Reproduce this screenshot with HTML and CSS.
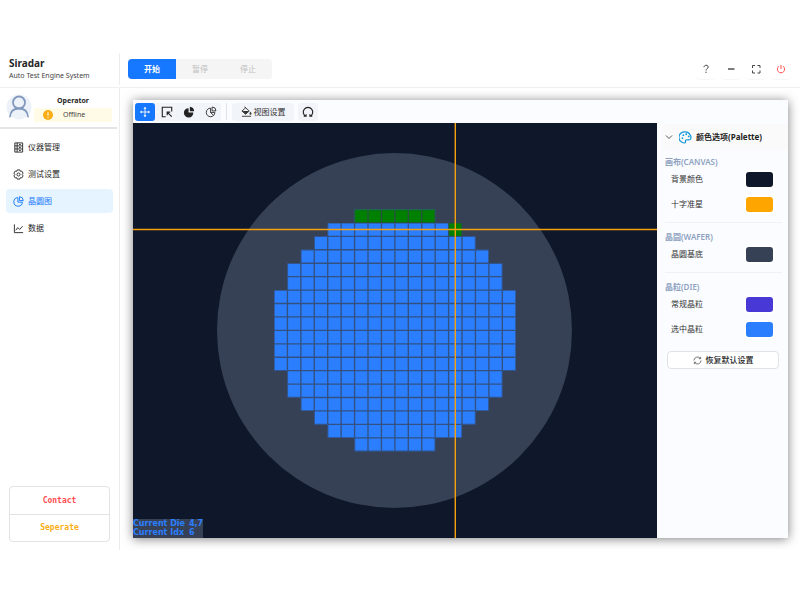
FILE: index.html
```html
<!DOCTYPE html>
<html lang="zh-CN">
<head>
<meta charset="utf-8">
<title>Siradar</title>
<link rel="stylesheet" href="styles.css">
</head>
<body>
<div class="app">
  <header class="topbar">
    <div class="brand">
      <h1>Siradar</h1>
      <p>Auto Test Engine System</p>
    </div>
    <div class="run-group">
      <button class="run primary">开始</button>
      <button class="run" disabled>暂停</button>
      <button class="run" disabled>停止</button>
    </div>
    <div class="window-tools">
      <button class="win" aria-label="Help"><svg viewBox="0 0 10 10"><path d="M3 3.200C3 .6 7.200.7 7.200 3 7.200 4.700 5 4.600 5 6.500M5 7.700V9"/></svg></button>
      <button class="win" aria-label="Minimize"><svg viewBox="0 0 10 10"><path d="M2 5h6.500" stroke-width="1.400"/></svg></button>
      <button class="win" aria-label="Full screen"><svg viewBox="0 0 10 10"><path d="M1.500 4V1.500H4M6.500 1.500H9V4M9 6.500V9H6.500M4 9H1.500V6.500"/></svg></button>
      <button class="win power" aria-label="Power"><svg viewBox="0 0 10 10"><path d="M3 2.200a3.600 3.600 0 1 0 4 0M5 1v4"/></svg></button>
    </div>
  </header>

  <div class="body">
    <aside class="sidebar">
      <div class="user">
        <svg class="avatar" viewBox="0 0 26 26"><circle cx="13" cy="13" r="12.500" fill="#edf2f9" stroke="none"/><g fill="none" stroke="#8299bd" stroke-width="1.800" stroke-linecap="round"><circle cx="13" cy="8.500" r="6"/><path d="M4 22.500c.5-5 3.500-8 9-8s8.500 3 9 8"/></g></svg>
        <div class="user-info">
          <strong>Operator</strong>
          <span class="status"><svg viewBox="0 0 10 10"><circle cx="5" cy="5" r="5" fill="#faad14" stroke="none"/><path d="M5 2.200v3.600M5 7v1" stroke="#fff" stroke-width="1"/></svg><span>Offline</span></span>
        </div>
      </div>
      <nav class="menu">
        <a href="#"><svg viewBox="0 0 12 12"><path d="M2 1h8.500v10H2zM2 4.300h8.500M2 7.600h8.500M4.500 1v10M6.500 2.700h2M6.500 6h2M6.500 9.300h2"/></svg>仪器管理</a>
        <a href="#"><svg viewBox="0 0 12 12"><path d="M4.600 1h2.800l.5 1.500 1.600-.3L11 4.500 10 6l1 1.500-1.500 2.300-1.600-.3-.5 1.500H4.600l-.5-1.500-1.600.3L1 7.500 2 6 1 4.500l1.500-2.300 1.600.3z"/><circle cx="6" cy="6" r="1.700"/></svg>测试设置</a>
        <a href="#" class="active"><svg viewBox="0 0 12 12"><path d="M5.300 1.700a4.700 4.700 0 1 0 5 5H5.300zM7 .8V5h4.200A4.300 4.300 0 0 0 7 .8z"/></svg>晶圆图</a>
        <a href="#"><svg viewBox="0 0 12 12"><path d="M1.500 1.500v9H11M3 8l2.200-3 2 2 3.300-3.500"/></svg>数据</a>
      </nav>
      <div class="links">
        <button class="contact">Contact</button>
        <button class="separate">Seperate</button>
      </div>
    </aside>

    <main class="workspace">
      <section class="panel">
        <div class="viewer">
          <div class="tools">
            <div class="modes">
              <button class="tool on" aria-label="Move"><svg viewBox="0 0 14 14"><path d="M7 2v10M2 7h10" /><path d="M7 1 5.200 3.200h3.600zM7 13l1.800-2.200H5.200zM1 7l2.200 1.800V5.200zM13 7l-2.200-1.800v3.600z" fill="currentColor" stroke="none"/></svg></button>
              <button class="tool" aria-label="Select"><svg viewBox="0 0 14 14"><path stroke-width="1.300" d="M5.500 12.500H1.500V1.500h11v5M7.500 7.500l5 5M7.200 10.800V7.200h3.600"/></svg></button>
              <button class="tool" aria-label="Filled chart"><svg viewBox="0 0 14 14"><path d="M6.500 2.500v5H12A5.500 5.500 0 1 1 6.500 2.500zM8 1a5.500 5.500 0 0 1 5 5H8z" fill="currentColor" stroke="none"/></svg></button>
              <button class="tool" aria-label="Outlined chart"><svg viewBox="0 0 14 14"><path d="M6.500 2.500v5h5A5 5 0 1 1 6.500 2.500zM8.300 1.200v4.500h4.500a4.500 4.500 0 0 0-4.500-4.500zM6.500 7.500l3.500 3.500"/></svg></button>
            </div>
            <span class="split"></span>
            <button class="view-set"><svg viewBox="0 0 12 12"><path d="M4 1l5 4.500L5 9 1 5.500 5 2z"/><path d="M1.500 5.500h7L5 9zM10.300 6.300s1.200 1.500 1.200 2.200a1.100 1.100 0 0 1-2.300 0c0-.7 1.100-2.200 1.100-2.200z" fill="currentColor" stroke="none"/><path d="M1 11.200h10"/></svg>视图设置</button>
            <button class="tool" aria-label="Rotate"><svg viewBox="0 0 14 14"><path stroke-width="1.300" d="M4.500 12A5.500 5.500 0 1 1 9.500 12M2 11.800h2.800V9.500M9.200 9.500v2.300H12"/></svg></button>
          </div>
          <div class="canvas">
            <svg viewBox="0 0 524 415" preserveAspectRatio="xMidYMid slice" role="img" aria-label="Wafer map">
              <defs>
                <path id="dies" d="M6 0h6v1h2v1h1v1h1v1h1v2h1v6h-1v2h-1v1h-1v1h-1v1h-2v1H6v-1H4v-1H3v-1H2v-1H1v-2H0V6h1V4h1V3h1V2h1V1h2z"/>
                <clipPath id="die-area"><use href="#dies"/></clipPath>
              </defs>
              <circle cx="261.500" cy="207.500" r="177.500" fill="#364156"/>
              <g transform="translate(141 86.500) scale(13.430)">
                <use href="#dies" fill="#2b7fff"/>
                <path d="M6 0h6v1H6zM13 1h1v1h-1z" fill="#008000"/>
                <path clip-path="url(#die-area)" fill="none" stroke="#364156" stroke-opacity=".75" stroke-width=".1" d="M0 0h18M0 1h18M0 2h18M0 3h18M0 4h18M0 5h18M0 6h18M0 7h18M0 8h18M0 9h18M0 10h18M0 11h18M0 12h18M0 13h18M0 14h18M0 15h18M0 16h18M0 17h18M0 18h18M0 0v18M1 0v18M2 0v18M3 0v18M4 0v18M5 0v18M6 0v18M7 0v18M8 0v18M9 0v18M10 0v18M11 0v18M12 0v18M13 0v18M14 0v18M15 0v18M16 0v18M17 0v18M18 0v18"/>
              </g>
              <path d="M0 106.500h524M322.300 0v415" stroke="#f5a00f" stroke-width="1.400"/>
            </svg>
            <dl class="readout">
              <dt>Current Die</dt><dd>4,7</dd>
              <dt>Current Idx</dt><dd>6</dd>
            </dl>
          </div>
        </div>

        <div class="palette">
          <h2><svg class="chev" viewBox="0 0 8 8"><path d="M1 2.500l3 3 3-3"/></svg><svg class="pal" viewBox="0 0 14 14"><path stroke-width="1.300" d="M7 1a6 6 0 1 0-1 11.900c1.700 0 .5-2 1.200-3 .9-1.200 3 .2 4.700-.7C14.500 7 11.500 1 7 1z"/><g fill="currentColor" stroke="none"><circle cx="3.700" cy="7.600" r="1"/><circle cx="4.700" cy="4.500" r="1"/><circle cx="7.800" cy="3.500" r="1"/><circle cx="10.500" cy="5.800" r="1"/></g></svg>颜色选项(Palette)</h2>
          <section>
            <h3>画布(CANVAS)</h3>
            <div class="row"><span>背景颜色</span><button class="swatch bg" aria-label="背景颜色"></button></div>
            <div class="row"><span>十字准星</span><button class="swatch cross" aria-label="十字准星"></button></div>
          </section>
          <section>
            <h3>晶圆(WAFER)</h3>
            <div class="row"><span>晶圆基底</span><button class="swatch base" aria-label="晶圆基底"></button></div>
          </section>
          <section>
            <h3>晶粒(DIE)</h3>
            <div class="row"><span>常规晶粒</span><button class="swatch normal" aria-label="常规晶粒"></button></div>
            <div class="row"><span>选中晶粒</span><button class="swatch picked" aria-label="选中晶粒"></button></div>
          </section>
          <button class="reset"><svg viewBox="0 0 10 10"><path d="M1 5a4 4 0 0 1 7.200-2.200M9 5a4 4 0 0 1-7.200 2.200M8.500 1v2h-2M1.500 9V7h2"/></svg>恢复默认设置</button>
        </div>
      </section>
    </main>
  </div>
</div>
</body>
</html>
```

FILE: styles.css
```css
* { box-sizing: border-box; margin: 0; }
body {
  min-height: 100vh;
  padding: 52px 0 50px;
  display: flex;
  background: #fff;
  color: #262626;
  font: 8px/12px "Noto Sans", "Noto Sans CJK SC", sans-serif;
}
button { font: inherit; color: inherit; border: 0; padding: 0; background: none; }
svg { flex: none; fill: none; stroke: currentColor; }
.app { flex: 1; min-width: 0; display: flex; flex-direction: column; }

.topbar { display: flex; align-items: center; height: 36px; padding-bottom: 2px; border-bottom: 1px solid #f0f0f0; }
.brand { width: 120px; padding-left: 9px; height: 32px; border-right: 1px solid #ececec; white-space: nowrap; }
.brand h1 { font-size: 10px; line-height: 12px; padding-top: 4px; }
.brand p { font-size: 7px; line-height: 14px; color: #444; }
.run-group { display: flex; margin-left: 8px; border-radius: 4px; overflow: hidden; background: #f5f5f5; }
.run { width: 48px; height: 20px; color: #bfbfbf; }
.run.primary { background: #1677ff; color: #fff; font-weight: 700; }
.window-tools { display: flex; gap: 5px; margin-left: auto; padding-right: 9px; }
.win { display: grid; place-items: center; width: 20px; height: 20px; color: #444; border-radius: 4px; box-shadow: 0 1px 0 #f7f7f7; }
.win svg { width: 10px; height: 10px; }
.power { color: #ff4d4f; }

.body { flex: 1; display: flex; min-height: 0; }
.sidebar { flex: none; width: 120px; border-right: 1px solid #ececec; display: flex; flex-direction: column; }
.user { display: flex; gap: 2px; height: 41px; padding: 6px 5px 0 6px; margin-right: 2px; border-bottom: 2px solid #e4e4e4; }
.avatar { width: 26px; height: 26px; }
.user-info { flex: 1; display: flex; flex-direction: column; text-align: center; }
.user-info strong { font-size: 7px; line-height: 14px; }
.status { display: flex; align-items: center; gap: 10px; height: 14px; padding-left: 9px; background: #fffbe6; font-size: 7px; color: #444; }
.status svg { width: 10px; height: 10px; }
.menu { display: flex; flex-direction: column; gap: 3px; padding: 6px 6px 0; }
.menu a { display: flex; align-items: center; gap: 4px; height: 24px; padding-left: 7px; border-radius: 4px; color: #262626; text-decoration: none; }
.menu svg { width: 11px; height: 11px; }
.menu .active { background: #e6f4ff; color: #1677ff; }
.links { margin: auto 9px 8px; border: 1px solid #e3e3e3; border-radius: 4px; display: flex; flex-direction: column; }
.links button { height: 27px; font: 700 8px/12px "DejaVu Sans Mono", monospace; }
.links button + button { border-top: 1px solid #e3e3e3; }
.contact { color: #ff4d4f; }
.separate { color: #faad14; }

.workspace { flex: 1; min-width: 0; display: flex; padding: 12px 12px 12px 13px; overflow: hidden; }
.panel { flex: 1; min-width: 0; display: flex; background: #fafcff; box-shadow: 0 1px 10px rgba(0, 0, 0, .5); }
.viewer { flex: 1; min-width: 0; display: flex; flex-direction: column; }
.tools { display: flex; align-items: center; height: 23px; padding-left: 2px; }
.modes { display: flex; gap: 2px; background: #f1f4f9; border-radius: 4px; }
.tool { display: grid; place-items: center; width: 20px; height: 18px; border-radius: 3px; background: #f1f4f9; color: #222; }
.tool svg { width: 12px; height: 12px; }
.tool.on { background: #1677ff; color: #fff; }
.split { width: 1px; height: 17px; margin: 0 5px; background: #e2e4e8; }
.view-set { display: flex; align-items: center; justify-content: center; gap: 2px; width: 62px; height: 18px; margin-right: 4px; border-radius: 4px; background: #f1f4f9; color: #333; }
.view-set svg { width: 11px; height: 11px; }
.canvas { flex: 1; min-height: 0; position: relative; background: #0f172a; overflow: hidden; }
.canvas svg { display: block; width: 100%; height: 100%; stroke: none; }
.readout {
  position: absolute; left: 0; bottom: 0;
  display: grid; grid-template-columns: auto auto; column-gap: 4px;
  padding-bottom: 1px; background: #364156; color: #2b7fff;
  font: 700 8px/9px "DejaVu Sans", sans-serif;
}
.readout dd { margin: 0; }

.palette { flex: none; width: 131px; }
.palette h2 { display: flex; align-items: center; height: 26px; margin: 24px 0 0 5px; padding-left: 3px; font-size: 8px; line-height: 12px; color: #222; background: #fafafa; white-space: nowrap; }
.chev { width: 8px; height: 8px; margin-right: 6px; color: #555; }
.pal { width: 13px; height: 13px; margin-right: 4px; color: #1296db; }
.palette section { margin: 0 6px 0 8px; padding: 6px 0 5px; }
.palette section + section { border-top: 1px solid #eef1f5; padding-top: 8px; }
.palette h3 { font-size: 8px; line-height: 11px; font-weight: 600; color: #8ea2c0; }
.row { display: flex; align-items: center; justify-content: space-between; height: 25px; padding: 0 7px 1px 6px; color: #333; }
.swatch { width: 31px; height: 19px; border: 2px solid #fff; border-radius: 5px; }
.bg { background: #0f172a; }
.cross { background: #ffa500; }
.base { background: #364156; }
.normal { background: #4839d6; }
.picked { background: #2b7fff; }
.reset { display: flex; align-items: center; justify-content: center; gap: 4px; width: 112px; height: 18px; margin: 4px 0 0 10px; border: 1px solid #e0e2e6; border-radius: 4px; background: #fff; color: #222; font-weight: 500; }
.reset svg { width: 9px; height: 9px; color: #666; }
```
